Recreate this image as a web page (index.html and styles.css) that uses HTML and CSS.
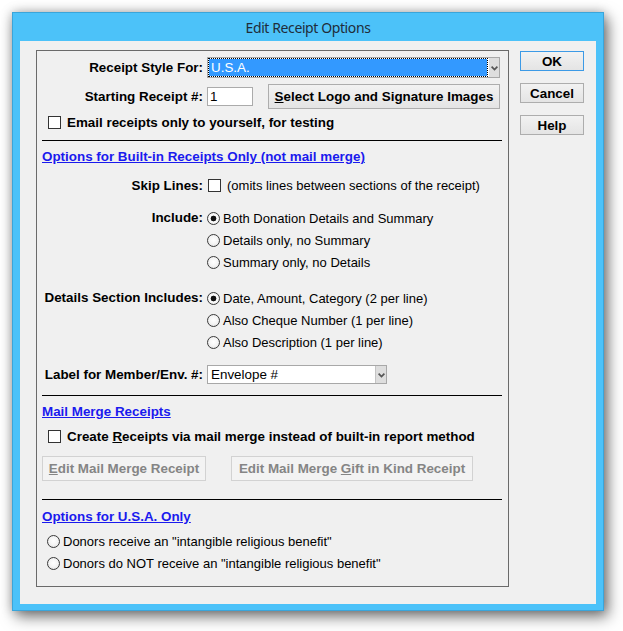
FILE: index.html
```html
<!DOCTYPE html>
<html>
<head>
<meta charset="utf-8">
<title>Edit Receipt Options</title>
<link rel="stylesheet" href="styles.css">
</head>
<body>
<div class="window">
  <div class="titlebar">Edit Receipt Options</div>
  <div class="client">
    <div class="group">
      <div class="frow r1">
        <span class="lbl">Receipt Style For:</span>
        <div class="select sel-usa">
          <span class="sel-val">U.S.A.</span>
          <span class="sel-arrow"><svg width="7" height="5" viewBox="0 0 7 5"><path d="M0.6 0.6 L3.5 3.6 L6.4 0.6" fill="none" stroke="#555" stroke-width="1.7"/></svg></span>
        </div>
      </div>
      <div class="frow r2">
        <span class="lbl">Starting Receipt #:</span>
        <div class="ctrls">
          <input class="textbox" type="text" value="1" readonly>
          <button class="btn btn-logo"><u>S</u>elect Logo and Signature Images</button>
        </div>
      </div>
      <label class="crow r3"><input type="checkbox" class="check"><span class="b">Email receipts only to yourself, for testing</span></label>
      <div class="sep s1"></div>
      <a class="link l1">Options for Built-in Receipts Only (not mail merge)</a>
      <div class="frow r-skip">
        <span class="lbl">Skip Lines:</span>
        <label class="opt skipopt"><input type="checkbox" class="check"><span>(omits lines between sections of the receipt)</span></label>
      </div>
      <div class="frow r-include">
        <span class="lbl lbl-top">Include:</span>
        <div class="radios">
          <label class="opt ropt"><input type="radio" class="radio" name="inc" checked><span>Both Donation Details and Summary</span></label>
          <label class="opt ropt"><input type="radio" class="radio" name="inc"><span>Details only, no Summary</span></label>
          <label class="opt ropt"><input type="radio" class="radio" name="inc"><span>Summary only, no Details</span></label>
        </div>
      </div>
      <div class="frow r-details">
        <span class="lbl lbl-top">Details Section Includes:</span>
        <div class="radios">
          <label class="opt ropt"><input type="radio" class="radio" name="det" checked><span>Date, Amount, Category (2 per line)</span></label>
          <label class="opt ropt"><input type="radio" class="radio" name="det"><span>Also Cheque Number (1 per line)</span></label>
          <label class="opt ropt"><input type="radio" class="radio" name="det"><span>Also Description (1 per line)</span></label>
        </div>
      </div>
      <div class="frow r-member">
        <span class="lbl">Label for Member/Env. #:</span>
        <div class="select sel-member">
          <span class="sel-val2">Envelope #</span>
          <span class="sel-arrow"><svg width="7" height="5" viewBox="0 0 7 5"><path d="M0.6 0.6 L3.5 3.6 L6.4 0.6" fill="none" stroke="#555" stroke-width="1.7"/></svg></span>
        </div>
      </div>
      <div class="sep s2"></div>
      <a class="link l2">Mail Merge Receipts</a>
      <label class="crow r-create"><input type="checkbox" class="check"><span class="b">Create <u>R</u>eceipts via mail merge instead of built-in report method</span></label>
      <div class="disrow">
        <button class="btn btn-dis dis1" disabled><u>E</u>dit Mail Merge Receipt</button>
        <button class="btn btn-dis dis2" disabled>Edit Mail Merge <u>G</u>ift in Kind Receipt</button>
      </div>
      <div class="sep s3"></div>
      <a class="link l3">Options for U.S.A. Only</a>
      <div class="usa">
        <label class="opt uopt"><input type="radio" class="radio" name="usa"><span>Donors receive an "intangible religious benefit"</span></label>
        <label class="opt uopt"><input type="radio" class="radio" name="usa"><span>Donors do NOT receive an "intangible religious benefit"</span></label>
      </div>
    </div>
    <div class="buttons">
      <button class="btn side default">OK</button>
      <button class="btn side">Cancel</button>
      <button class="btn side">Help</button>
    </div>
  </div>
</div>
</body>
</html>
```
FILE: styles.css
```css
html, body {
  margin: 0;
  padding: 0;
  background: #ffffff;
}
body {
  width: 623px;
  height: 631px;
  overflow: hidden;
  font-family: "Liberation Sans", Arial, sans-serif;
  font-size: 13px;
  color: #000;
}
.window {
  box-sizing: border-box;
  width: 592px;
  height: 599px;
  margin: 12px 0 0 12px;
  border: 1px solid #3aa5da;
  background: #4cc2f9;
  padding: 0 7px 6px 7px;
  display: flex;
  flex-direction: column;
  box-shadow: 0 0 10px rgba(0,0,0,0.25), 4px 6px 14px rgba(0,0,0,0.5);
}
.titlebar {
  height: 28px;
  line-height: 30px;
  text-align: center;
  font-family: "Noto Sans", "Open Sans", sans-serif;
  font-size: 14px;
  letter-spacing: -0.4px;
  color: #1f2d3a;
}
.client {
  flex: 1;
  background: #f0f0f0;
  display: flex;
  align-items: flex-start;
  padding: 9px 0 0 16px;
}
.group {
  box-sizing: border-box;
  width: 473px;
  height: 537px;
  border: 1px solid #6a6a6a;
  padding: 0 6px 0 5px;
  display: flex;
  flex-direction: column;
}
.frow {
  display: grid;
  grid-template-columns: 161px 1fr;
  column-gap: 4px;
  align-items: center;
}
.lbl {
  font-weight: bold;
  font-size: 13.4px;
  text-align: right;
  white-space: nowrap;
}
.lbl-top {
  align-self: start;
  line-height: 22px;
}
.b { font-weight: bold; font-size: 13.4px; }

.r1 { margin-top: 6px; height: 21px; }
.r2 { margin-top: 6px; height: 25px; }
.r3 { margin-top: 5px; height: 16px; }
.s1 { margin-top: 10px; }
.l1 { margin-top: 8px; }
.r-skip { margin-top: 12px; height: 16px; }
.r-include { margin-top: 14px; align-items: start; }
.r-details { margin-top: 14px; align-items: start; }
.r-member { margin-top: 11px; height: 21px; }
.s2 { margin-top: 10px; }
.l2 { margin-top: 8px; }
.r-create { margin-top: 8px; height: 16px; }
.disrow { margin-top: 12px; height: 25px; display: flex; }
.s3 { margin-top: 18px; }
.l3 { margin-top: 9px; }
.usa { margin-top: 5px; display: flex; flex-direction: column; }

.select {
  box-sizing: border-box;
  border: 1px solid #a8a8a8;
  display: flex;
  background: #fff;
}
.sel-usa { width: 293px; height: 21px; }
.sel-member { width: 180px; height: 19px; }
.sel-val {
  flex: 1;
  box-sizing: border-box;
  border: 1px dotted #000;
  background: linear-gradient(#3399ff, #3399ff) padding-box, #ffffff border-box;
  color: #fff;
  font-size: 13.4px;
  line-height: 17px;
  padding-left: 2px;
  margin: 0 1px 0 0;
}
.sel-val2 {
  flex: 1;
  font-size: 13.4px;
  line-height: 17px;
  padding-left: 3px;
  border-right: 1px solid #c4c4c4;
}
.sel-arrow {
  width: 10px;
  background: #dedede;
  display: flex;
  align-items: center;
  justify-content: center;
}
.sel-arrow svg { display: block; margin-top: 2px; }

.ctrls { display: flex; align-items: center; }
.textbox {
  box-sizing: border-box;
  width: 46px;
  height: 19px;
  border: 1px solid #ababab;
  background: #fff;
  font-family: "Liberation Sans", Arial, sans-serif;
  font-size: 13.4px;
  padding: 0 0 0 2px;
  margin: 0;
  outline: none;
}
.btn {
  box-sizing: border-box;
  font-family: "Liberation Sans", Arial, sans-serif;
  font-size: 13.4px;
  font-weight: bold;
  color: #000;
  border: 1px solid #adadad;
  background: linear-gradient(#f2f2f2, #e4e4e4);
  padding: 0;
  margin: 0;
  border-radius: 0;
  white-space: nowrap;
}
.btn-logo {
  margin-left: 15px;
  width: 232px;
  height: 25px;
}
.btn-dis {
  height: 25px;
  color: #858585;
  border-color: #d2d2d2;
  background: #f3f3f3;
}
.dis1 { width: 164px; }
.dis2 { width: 242px; margin-left: 25px; }

.crow {
  display: flex;
  align-items: center;
  padding-left: 6px;
}
.crow .check { margin-right: 6px; }

.opt { display: flex; align-items: center; white-space: nowrap; }
.skipopt { padding-left: 1px; height: 16px; }
.skipopt .check { margin-right: 6px; }
.ropt { height: 22px; }
.ropt .radio { margin-right: 3px; }
.uopt { height: 22px; padding-left: 5px; }
.uopt .radio { margin-right: 3px; }

.check {
  -webkit-appearance: none;
  appearance: none;
  box-sizing: border-box;
  width: 13px;
  height: 13px;
  margin: 0;
  border: 1px solid #333;
  background: #fff;
  flex: none;
}
.radio {
  -webkit-appearance: none;
  appearance: none;
  box-sizing: border-box;
  width: 13px;
  height: 13px;
  margin: 0;
  border: 1px solid #3a3a3a;
  border-radius: 50%;
  background: radial-gradient(circle at 50% 45%, #ffffff 0, #f4f4f4 50%, #d8d8d8 100%);
  flex: none;
}
.radio:checked {
  background: radial-gradient(circle, #111 0, #111 2.6px, #ffffff 3.2px, #f0f0f0 70%, #d8d8d8 100%);
}

.sep {
  height: 1px;
  background: #000;
  flex: none;
}
.link {
  display: block;
  align-self: flex-start;
  line-height: 16px;
  font-weight: bold;
  font-size: 13.4px;
  color: #1a1aee;
  text-decoration: underline;
  cursor: pointer;
}

.buttons {
  display: flex;
  flex-direction: column;
  gap: 12px;
  margin-left: 11px;
  padding-top: 1px;
}
.side {
  width: 64px;
  height: 20px;
}
.default {
  border-color: #3c9ae6;
}
```
